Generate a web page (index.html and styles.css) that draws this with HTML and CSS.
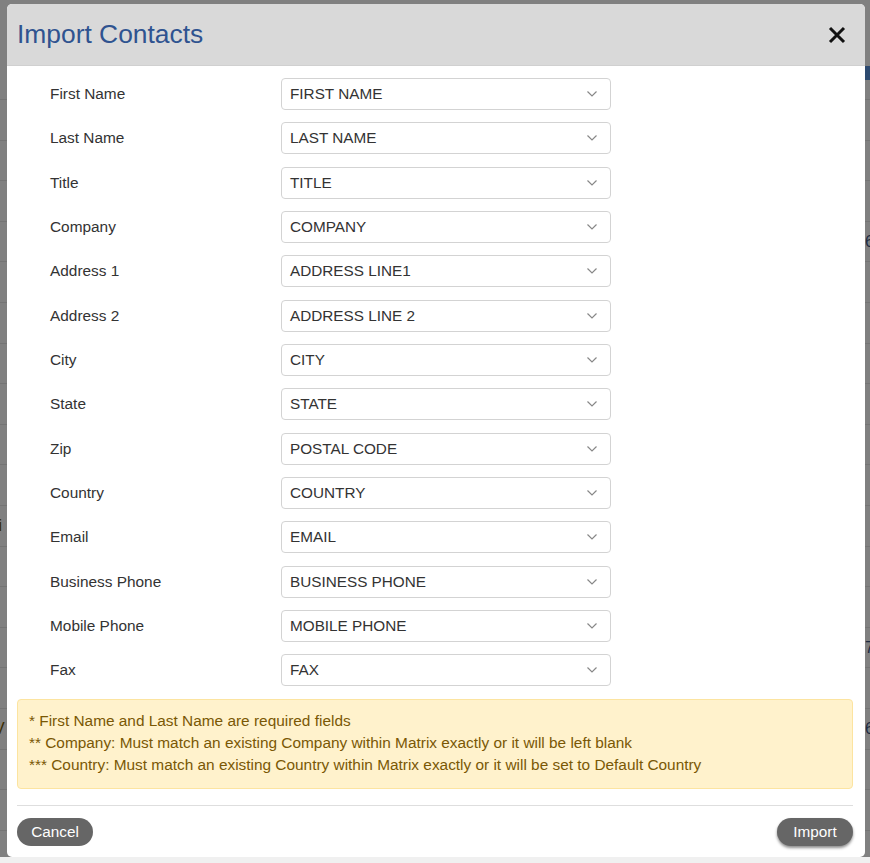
FILE: index.html
```html
<!DOCTYPE html>
<html>
<head>
<meta charset="utf-8">
<title>Import Contacts</title>
<link rel="stylesheet" href="styles.css">
</head>
<body>
<div class="page">
  <div class="page-band"></div>
  <div class="page-row first"></div>
  <div class="page-row"></div>
  <div class="page-row"></div>
  <div class="page-row"></div>
  <div class="page-row"><span class="frag frag-right">6</span></div>
  <div class="page-row"></div>
  <div class="page-row"></div>
  <div class="page-row"></div>
  <div class="page-row"></div>
  <div class="page-row"></div>
  <div class="page-row"></div>
  <div class="page-row"><span class="frag frag-left">ti</span></div>
  <div class="page-row"></div>
  <div class="page-row"></div>
  <div class="page-row"><span class="frag frag-right">7</span></div>
  <div class="page-row"></div>
  <div class="page-row"><span class="frag frag-left">V</span><span class="frag frag-right">6</span></div>
  <div class="page-row"></div>
  <div class="page-row"></div>
  <div class="page-row"></div>
</div>
<div class="hscroll"></div>

<div class="modal">
  <div class="modal-header">
    <h1 class="modal-title">Import Contacts</h1>
    <button class="close" aria-label="Close">
      <svg width="18" height="18" viewBox="0 0 18 18"><path d="M2 2 L16 16 M16 2 L2 16" stroke="#111" stroke-width="3" stroke-linecap="butt"/></svg>
    </button>
  </div>
  <div class="modal-body">
    <div class="form">
      <label class="lbl">First Name</label>
      <div class="sel"><span>FIRST NAME</span><svg class="chev" width="10" height="6" viewBox="0 0 10 6"><path d="M0.5 0.5 L5 5 L9.5 0.5" fill="none" stroke="#888" stroke-width="1.2"/></svg></div>
      <label class="lbl">Last Name</label>
      <div class="sel"><span>LAST NAME</span><svg class="chev" width="10" height="6" viewBox="0 0 10 6"><path d="M0.5 0.5 L5 5 L9.5 0.5" fill="none" stroke="#888" stroke-width="1.2"/></svg></div>
      <label class="lbl">Title</label>
      <div class="sel"><span>TITLE</span><svg class="chev" width="10" height="6" viewBox="0 0 10 6"><path d="M0.5 0.5 L5 5 L9.5 0.5" fill="none" stroke="#888" stroke-width="1.2"/></svg></div>
      <label class="lbl">Company</label>
      <div class="sel"><span>COMPANY</span><svg class="chev" width="10" height="6" viewBox="0 0 10 6"><path d="M0.5 0.5 L5 5 L9.5 0.5" fill="none" stroke="#888" stroke-width="1.2"/></svg></div>
      <label class="lbl">Address 1</label>
      <div class="sel"><span>ADDRESS LINE1</span><svg class="chev" width="10" height="6" viewBox="0 0 10 6"><path d="M0.5 0.5 L5 5 L9.5 0.5" fill="none" stroke="#888" stroke-width="1.2"/></svg></div>
      <label class="lbl">Address 2</label>
      <div class="sel"><span>ADDRESS LINE 2</span><svg class="chev" width="10" height="6" viewBox="0 0 10 6"><path d="M0.5 0.5 L5 5 L9.5 0.5" fill="none" stroke="#888" stroke-width="1.2"/></svg></div>
      <label class="lbl">City</label>
      <div class="sel"><span>CITY</span><svg class="chev" width="10" height="6" viewBox="0 0 10 6"><path d="M0.5 0.5 L5 5 L9.5 0.5" fill="none" stroke="#888" stroke-width="1.2"/></svg></div>
      <label class="lbl">State</label>
      <div class="sel"><span>STATE</span><svg class="chev" width="10" height="6" viewBox="0 0 10 6"><path d="M0.5 0.5 L5 5 L9.5 0.5" fill="none" stroke="#888" stroke-width="1.2"/></svg></div>
      <label class="lbl">Zip</label>
      <div class="sel"><span>POSTAL CODE</span><svg class="chev" width="10" height="6" viewBox="0 0 10 6"><path d="M0.5 0.5 L5 5 L9.5 0.5" fill="none" stroke="#888" stroke-width="1.2"/></svg></div>
      <label class="lbl">Country</label>
      <div class="sel"><span>COUNTRY</span><svg class="chev" width="10" height="6" viewBox="0 0 10 6"><path d="M0.5 0.5 L5 5 L9.5 0.5" fill="none" stroke="#888" stroke-width="1.2"/></svg></div>
      <label class="lbl">Email</label>
      <div class="sel"><span>EMAIL</span><svg class="chev" width="10" height="6" viewBox="0 0 10 6"><path d="M0.5 0.5 L5 5 L9.5 0.5" fill="none" stroke="#888" stroke-width="1.2"/></svg></div>
      <label class="lbl">Business Phone</label>
      <div class="sel"><span>BUSINESS PHONE</span><svg class="chev" width="10" height="6" viewBox="0 0 10 6"><path d="M0.5 0.5 L5 5 L9.5 0.5" fill="none" stroke="#888" stroke-width="1.2"/></svg></div>
      <label class="lbl">Mobile Phone</label>
      <div class="sel"><span>MOBILE PHONE</span><svg class="chev" width="10" height="6" viewBox="0 0 10 6"><path d="M0.5 0.5 L5 5 L9.5 0.5" fill="none" stroke="#888" stroke-width="1.2"/></svg></div>
      <label class="lbl">Fax</label>
      <div class="sel"><span>FAX</span><svg class="chev" width="10" height="6" viewBox="0 0 10 6"><path d="M0.5 0.5 L5 5 L9.5 0.5" fill="none" stroke="#888" stroke-width="1.2"/></svg></div>
    </div>
    <div class="alert">
      <div>* First Name and Last Name are required fields</div>
      <div>** Company: Must match an existing Company within Matrix exactly or it will be left blank</div>
      <div>*** Country: Must match an existing Country within Matrix exactly or it will be set to Default Country</div>
    </div>
  </div>
  <div class="modal-footer">
    <button class="btn">Cancel</button>
    <button class="btn btn-shadow">Import</button>
  </div>
</div>
</body>
</html>
```
FILE: styles.css
```css
* { box-sizing: border-box; }
html, body { margin: 0; padding: 0; }
body {
  width: 870px;
  height: 863px;
  overflow: hidden;
  background: #808080;
  font-family: "Liberation Sans", Arial, sans-serif;
  color: #333;
  position: relative;
}

/* dimmed page behind the modal */
.page {
  display: flex;
  flex-direction: column;
  padding-top: 66px;
}
.page-band {
  height: 14px;
  position: relative;
}
.page-band::after {
  content: "";
  position: absolute;
  right: 0;
  top: 0;
  width: 5px;
  height: 14px;
  background: #2d4a70;
}
.page-row {
  flex: 0 0 40.6px;
  border-bottom: 1px solid #747474;
  position: relative;
  font-size: 16px;
  color: #1c2a40;
}
.page-row.first { flex-basis: 20px; }
.frag { position: absolute; top: 11px; }
.frag-right { right: -4px; }
.frag-left { left: -6px; color: #3a2c00; }

.hscroll {
  position: absolute;
  left: 0;
  right: 0;
  bottom: 0;
  height: 6px;
  background: #f0f0f0;
}

/* modal */
.modal {
  position: absolute;
  left: 7px;
  top: 4px;
  width: 858px;
  height: 853px;
  background: #fff;
  border-radius: 5px;
  overflow: hidden;
  display: flex;
  flex-direction: column;
}
.modal-header {
  height: 62px;
  background: #d9d9d9;
  border-bottom: 1px solid #d0d0d0;
  display: flex;
  align-items: center;
  justify-content: space-between;
  padding: 0 18px 0 10px;
}
.modal-title {
  margin: 0;
  font-size: 26.4px;
  font-weight: normal;
  color: #2f5390;
  line-height: 1;
  padding-bottom: 1px;
}
.close {
  border: 0;
  background: none;
  padding: 0;
  width: 20px;
  height: 20px;
  display: flex;
  align-items: center;
  justify-content: center;
}

.modal-body {
  padding: 12px 12px 0 10px;
}
.form {
  display: grid;
  grid-template-columns: 231px 330px;
  row-gap: 12.33px;
  padding-left: 33px;
  align-items: center;
}
.lbl {
  font-size: 15.4px;
  color: #333;
}
.sel {
  height: 32px;
  border: 1px solid #d3d3d3;
  border-radius: 4px;
  display: flex;
  align-items: center;
  justify-content: space-between;
  padding: 0 13px 0 8px;
  font-size: 15.3px;
  color: #333;
}
.chev { display: block; }

.alert {
  margin-top: 13px;
  background: #fff2cc;
  border: 1px solid #fce4a0;
  border-radius: 4px;
  padding: 10px 11px 12px;
  font-size: 15.4px;
  line-height: 22px;
  color: #7a5805;
}

.modal-footer {
  margin: 16px 12px 0 10px;
  border-top: 1px solid #dedede;
  padding-top: 12px;
  display: flex;
  justify-content: space-between;
}
.btn {
  height: 28px;
  width: 76px;
  border: 0;
  border-radius: 14px;
  background: #666;
  color: #fff;
  font-family: "Liberation Sans", Arial, sans-serif;
  font-size: 15.3px;
  padding: 0;
}
.btn-shadow {
  box-shadow: 0 2px 3px rgba(0,0,0,0.45);
}
```
